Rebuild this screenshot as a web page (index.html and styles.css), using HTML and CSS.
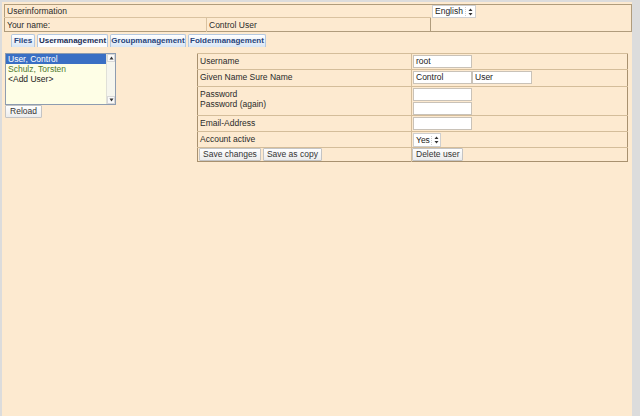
FILE: index.html
```html
<!DOCTYPE html>
<html>
<head>
<meta charset="utf-8">
<link rel="stylesheet" href="styles.css">
</head>
<body>
<div class="page">
  <table class="info">
    <colgroup><col class="w1"><col class="w2"><col></colgroup>
    <tr>
      <td colspan="2" class="c-title">Userinformation</td>
      <td rowspan="2" class="c-lang"><span class="select lang">English<span class="spin"><svg width="5" height="8" viewBox="0 0 5 8"><path d="M2.5 0.5 L4.5 3 L0.5 3 Z M0.5 5 L4.5 5 L2.5 7.5 Z" fill="#333"/></svg></span></span></td>
    </tr>
    <tr>
      <td class="c-name">Your name:</td>
      <td class="c-user">Control User</td>
    </tr>
  </table>

  <div class="tabs">
    <span class="tab t-files">Files</span>
    <span class="tab t-user active">Usermanagement</span>
    <span class="tab t-group">Groupmanagement</span>
    <span class="tab t-folder">Foldermanagement</span>
  </div>

  <div class="main">
    <div class="left">
      <div class="listbox">
        <div class="items">
          <div class="item selected">User, Control</div>
          <div class="item green">Schulz, Torsten</div>
          <div class="item">&lt;Add User&gt;</div>
        </div>
        <div class="scrollbar">
          <span class="arrow"><svg width="5" height="4" viewBox="0 0 5 4"><path d="M2.5 0.5 L4.5 3.5 L0.5 3.5 Z" fill="#333"/></svg></span>
          <span class="arrow"><svg width="5" height="4" viewBox="0 0 5 4"><path d="M0.5 0.5 L4.5 0.5 L2.5 3.5 Z" fill="#333"/></svg></span>
        </div>
      </div>
      <button class="btn reload">Reload</button>
    </div>

    <table class="form">
      <tr>
        <td class="lbl"><div class="cell h15">Username</div></td>
        <td class="val"><div class="cell h15 row"><span class="input">root</span></div></td>
      </tr>
      <tr>
        <td class="lbl"><div class="cell h16">Given Name Sure Name</div></td>
        <td class="val"><div class="cell h16 row"><span class="input">Control</span><span class="input wide">User</span></div></td>
      </tr>
      <tr>
        <td class="lbl"><div class="cell h28">Password<br>Password (again)</div></td>
        <td class="val"><div class="cell h28 col"><span class="input"></span><span class="input"></span></div></td>
      </tr>
      <tr>
        <td class="lbl"><div class="cell h15">Email-Address</div></td>
        <td class="val"><div class="cell h15 row"><span class="input"></span></div></td>
      </tr>
      <tr>
        <td class="lbl"><div class="cell h15">Account active</div></td>
        <td class="val"><div class="cell h15 row"><span class="select yes">Yes<span class="spin"><svg width="5" height="8" viewBox="0 0 5 8"><path d="M2.5 0.5 L4.5 3 L0.5 3 Z M0.5 5 L4.5 5 L2.5 7.5 Z" fill="#333"/></svg></span></span></div></td>
      </tr>
      <tr>
        <td class="lbl"><div class="cell h13 row btns"><button class="btn">Save changes</button><button class="btn">Save as copy</button></div></td>
        <td class="val"><div class="cell h13 row btns"><button class="btn">Delete user</button></div></td>
      </tr>
    </table>
  </div>
</div>
</body>
</html>
```

FILE: styles.css
```css
html, body {
  margin: 0;
  padding: 0;
  background: #dcdcdc;
  font-family: "Liberation Sans", Arial, sans-serif;
  font-size: 8.5px;
  color: #2a2a2a;
}

.page {
  margin: 2px 0 0 2px;
  width: 627px;
  height: 412px;
  padding: 2px 1px 0 2px;
  background: #fdead0;
  overflow: hidden;
}

/* top info table */
.info {
  width: 628px;
  table-layout: fixed;
  border-collapse: collapse;
  border: 1px solid #b09c7c;
}
.info .w1 { width: 202px; }
.info .w2 { width: 224px; }
.info td {
  padding: 0 2px;
  height: 12px;
  line-height: 12px;
  vertical-align: middle;
  white-space: nowrap;
  overflow: hidden;
}
.c-title {
  border-bottom: 1px solid #d9c2a0;
}
.c-name {
  height: 13px !important;
  border-right: 1px solid #d9c2a0;
}
.c-user {
  border-right: 1px solid #b09c7c;
}
.c-lang {
  vertical-align: top !important;
  padding: 0 0 0 1px !important;
}

.select {
  display: inline-flex;
  align-items: center;
  justify-content: space-between;
  box-sizing: border-box;
  height: 13px;
  padding: 0 2px;
  background: #fff;
  border: 1px solid #cfcfcf;
  line-height: 11px;
  color: #222;
}
.select .spin {
  display: inline-flex;
  align-items: center;
  padding-left: 2px;
  border-left: 1px dotted #ccc;
  height: 9px;
}
.select.lang { width: 44px; }
.select.yes { width: 28px; height: 14px; padding: 0 1px 0 2px; }

/* tabs */
.tabs {
  display: flex;
  margin-top: 2px;
  padding-left: 7px;
  height: 13px;
}
.tab {
  box-sizing: border-box;
  height: 13px;
  margin-right: 2px;
  border: 1px solid #b4c8e0;
  border-bottom: none;
  border-radius: 2px 2px 0 0;
  background: linear-gradient(#ffffff, #d8e5f3);
  color: #27437a;
  font-weight: bold;
  font-size: 8px;
  line-height: 12px;
  text-align: center;
  white-space: nowrap;
}
.tab.active {
  background: #fbfcfe;
  color: #1a2d55;
}
.t-files { width: 24px; }
.t-user { width: 71px; }
.t-group { width: 76px; }
.t-folder { width: 78px; }

/* main */
.main {
  display: flex;
  align-items: flex-start;
  margin-top: 6px;
}
.left {
  width: 192px;
  padding-left: 1px;
}
.listbox {
  box-sizing: border-box;
  width: 111px;
  height: 52px;
  display: flex;
  border: 1px solid #8d9cb0;
  background: #fefee6;
}
.items {
  flex: 1;
}
.item {
  height: 10px;
  line-height: 10px;
  padding-left: 2px;
  white-space: nowrap;
  color: #222;
}
.item.selected {
  background: #3a6fc4;
  color: #fff;
}
.item.green {
  color: #4f7a2c;
}
.scrollbar {
  width: 8px;
  display: flex;
  flex-direction: column;
  justify-content: space-between;
  background: #f6f6ee;
  border-left: 1px solid #e0e0d8;
}
.arrow {
  display: flex;
  align-items: center;
  justify-content: center;
  height: 8px;
  background: #fafafa;
  border: 1px solid #d8d8d8;
  box-sizing: border-box;
}

.btn {
  font-family: "Liberation Sans", Arial, sans-serif;
  font-size: 8.5px;
  color: #333;
  box-sizing: border-box;
  height: 13px;
  line-height: 11px;
  padding: 0 3px;
  margin: 0;
  background: linear-gradient(#fefefe, #ececec);
  border: 1px solid #c4c4c4;
  border-radius: 1px;
  white-space: nowrap;
}
.reload {
  display: block;
  width: 37px;
  padding: 0;
}

/* form table */
.form {
  width: 431px;
  border-collapse: collapse;
  border: 1px solid #a8916f;
}
.form td {
  border-top: 1px solid #d4bd9a;
  padding: 0;
  vertical-align: top;
  white-space: nowrap;
}
.form .lbl {
  width: 213px;
  border-right: 1px solid #d4bd9a;
}
.cell {
  box-sizing: border-box;
  line-height: 10px;
}
.lbl .cell { padding: 2px 0 0 2px; }
.val .cell { padding: 1px 0 0 1px; }
.h13 { height: 13px; }
.h15 { height: 15px; }
.h16 { height: 16px; }
.h28 { height: 28px; }
.row { display: flex; align-items: flex-start; }
.col { display: flex; flex-direction: column; gap: 1px; }
.lbl .btns { padding: 0 0 0 1px; gap: 2px; }
.val .btns { padding: 0; }

.input {
  display: block;
  box-sizing: border-box;
  width: 59px;
  height: 13px;
  padding: 0 2px;
  line-height: 11px;
  background: #fff;
  border: 1px solid #c9c2b8;
  color: #222;
}
.input.wide {
  width: 60px;
}
```
